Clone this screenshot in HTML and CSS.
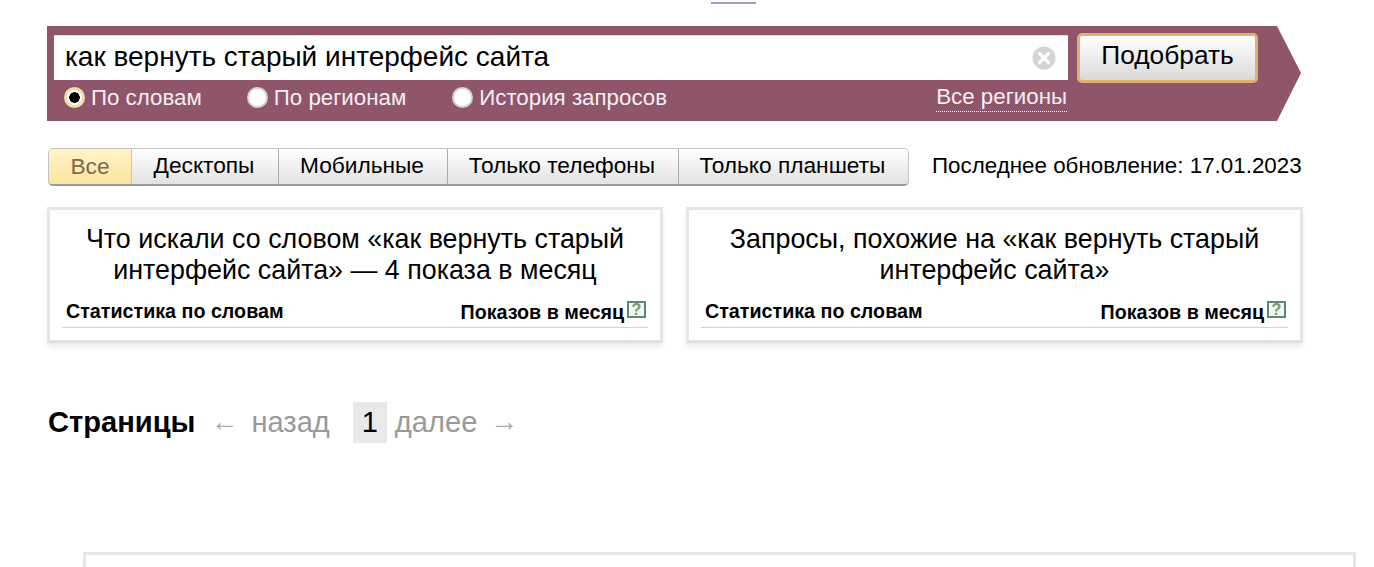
FILE: index.html
```html
<!DOCTYPE html>
<html lang="ru">
<head>
<meta charset="utf-8">
<title>Подбор слов</title>
<link rel="stylesheet" href="styles.css">
</head>
<body>
<div class="top-mark"></div>
<main class="page">
  <form class="search">
    <div class="search-top">
      <div class="search-input">
        <span class="query">как вернуть старый интерфейс сайта</span>
        <svg class="clear" width="24" height="24" viewBox="0 0 24 24"><circle cx="12" cy="12" r="11.5" fill="#d4d4d4"/><path d="M7.5 7.5l9 9M16.5 7.5l-9 9" stroke="#fff" stroke-width="3.2" stroke-linecap="round"/></svg>
      </div>
      <div class="submit"><span>Подобрать</span></div>
    </div>
    <div class="search-bottom">
      <label class="radio radio-1"><span class="dot dot-on"></span>По словам</label>
      <label class="radio radio-2"><span class="dot"></span>По регионам</label>
      <label class="radio radio-3"><span class="dot"></span>История запросов</label>
      <a class="regions">Все регионы</a>
    </div>
  </form>

  <div class="filter-row">
    <div class="tabs">
      <span class="tab tab-all">Все</span>
      <span class="tab tab-desk">Десктопы</span>
      <span class="tab tab-mob">Мобильные</span>
      <span class="tab tab-phone">Только телефоны</span>
      <span class="tab tab-tablet">Только планшеты</span>
    </div>
    <div class="updated">Последнее обновление: 17.01.2023</div>
  </div>

  <div class="cards">
    <section class="card">
      <h2>Что искали со словом «как вернуть старый интерфейс сайта» — 4 показа в месяц</h2>
      <div class="card-head">
        <span class="col-name">Статистика по словам</span>
        <span class="col-count">Показов в месяц<svg class="help" width="19" height="17" viewBox="0 0 19 17"><rect x="1" y="1" width="17" height="15" fill="#f2f7f3" stroke="#5c8a6c" stroke-width="2"/><text x="9.5" y="14" text-anchor="middle" class="help-q">?</text></svg></span>
      </div>
    </section>
    <section class="card">
      <h2>Запросы, похожие на «как вернуть старый интерфейс сайта»</h2>
      <div class="card-head">
        <span class="col-name">Статистика по словам</span>
        <span class="col-count">Показов в месяц<svg class="help" width="19" height="17" viewBox="0 0 19 17"><rect x="1" y="1" width="17" height="15" fill="#f2f7f3" stroke="#5c8a6c" stroke-width="2"/><text x="9.5" y="14" text-anchor="middle" class="help-q">?</text></svg></span>
      </div>
    </section>
  </div>

  <nav class="pager">
    <b class="pager-title">Страницы</b>
    <span class="arrow arrow-l">←</span>
    <span class="muted back">назад</span>
    <span class="current">1</span>
    <span class="muted next">далее</span>
    <span class="arrow arrow-r">→</span>
  </nav>

  <div class="bottom-card"></div>
</main>
</body>
</html>
```
FILE: styles.css
```css
* { box-sizing: border-box; }
html, body { margin: 0; padding: 0; height: 567px; overflow: hidden; background: #fff; }
body { font-family: "Liberation Sans", Arial, sans-serif; color: #000; }

.top-mark { height: 2px; width: 45px; margin: 2px 0 0 711px; background: #9a9fc8; }
.page { padding: 22px 0 0 47px; }

.search {
  width: 1254px; height: 95px; background: #8f566b; padding: 9px 0 0 7px;
  clip-path: polygon(0 0, 1230px 0, 1254px 47px, 1230px 95px, 0 95px);
}
.search-top { display: flex; align-items: center; height: 45px; }
.search-input {
  width: 1014px; height: 45px; background: #fff; border-top: 1px solid #e2dde0;
  display: flex; align-items: center; justify-content: space-between; padding: 0 12px 0 11px;
}
.query { font-size: 28px; position: relative; top: -1px; }
.submit {
  width: 181px; height: 50px; margin-left: 9px; border: 3px solid #d9b56f; border-radius: 5px;
  background: linear-gradient(#fff, #d9d9d9); display: flex; align-items: center; justify-content: center;
  font-size: 26.3px; padding-bottom: 4px;
}
.search-bottom { display: flex; align-items: center; height: 36px; color: #fff; font-size: 22.3px; position: relative; }
.radio { display: flex; align-items: center; gap: 6px; color: #f6eef2; }
.radio-1 { margin-left: 10px; }
.radio-2 { margin-left: 45px; }
.radio-3 { margin-left: 46px; }
.dot { width: 21px; height: 21px; border-radius: 50%; background: #fff; border: 2px solid #d8d3d8; margin-top: -2px; }
.dot-on { border: 3px solid #f0dcb0; background: radial-gradient(circle, #000 0 5px, #fff 5.5px); }
.regions { margin-left: auto; margin-right: 234px; border-bottom: 1px dotted #fff; color: #f6eef2; line-height: 28px; margin-top: -2px; }

.filter-row { display: flex; align-items: center; margin-top: 27px; height: 38px; }
.tabs {
  display: flex; width: 861px; height: 38px; margin-left: 1px; border: 1px solid #c4c4c4; border-bottom: 2px solid #999;
  border-radius: 5px; overflow: hidden; font-size: 22.7px;
}
.tab {
  display: flex; align-items: center; justify-content: center; padding: 0 2px 3px 0;
  background: linear-gradient(#fff, #e2e2e2); border-right: 1px solid #aaa;
}
.tab-all { width: 83px; background: linear-gradient(#fff3c8, #fbe69e); color: #7a6a4e; border-right-color: #d8c890; padding: 0; }
.tab-desk { width: 147px; }
.tab-mob { width: 169px; }
.tab-phone { width: 231px; }
.tab-tablet { flex: 1; border-right: 0; }
.updated { margin-left: 23px; font-size: 22.36px; padding-bottom: 3px; white-space: nowrap; }

.cards { display: flex; gap: 23px; margin-top: 21px; width: 1256px; }
.card {
  width: 616px; height: 136px; border: 3px solid #e6e6e6; border-bottom-color: #e0e0e0; background: #fff; box-shadow: 0 4px 6px rgba(0,0,0,.08);
  padding: 14px 12px 0;
}
.card + .card { width: 617px; }
.card h2 { margin: 0 auto; width: 560px; font-weight: 400; font-size: 26.85px; line-height: 31px; text-align: center; }
.card-head {
  display: flex; justify-content: space-between; align-items: flex-end; height: 35px; border-bottom: 1px solid #d4d4d4;
  font-weight: 700; font-size: 19.7px; padding: 0 2px 4px 4px; margin-top: 7px;
}
.col-name { position: relative; top: 0; }
.col-count { display: flex; align-items: flex-start; line-height: 22px; }
.help { margin: 0 0 0 3px; }
.help-q { font: 700 16px "Liberation Sans", Arial, sans-serif; fill: #6d9a7e; }

.pager { display: flex; align-items: center; height: 41px; margin: 59px 0 0 1px; font-size: 29.1px; }
.pager-title { font-weight: 700; }
.muted { color: #999; }
.arrow { color: #aaa; font-size: 28px; padding-bottom: 1px; }
.arrow-l { margin-left: 15px; }
.back { margin-left: 13px; }
.current { margin-left: 23px; width: 34px; height: 41px; background: #e9e9e9; display: flex; align-items: center; justify-content: center; }
.next { margin-left: 8px; }
.arrow-r { margin-left: 13px; }

.bottom-card { width: 1273px; height: 16px; margin: 109px 0 0 36px; border: 3px solid #e6e6e6; border-bottom: 0; background: #fff; }
```
